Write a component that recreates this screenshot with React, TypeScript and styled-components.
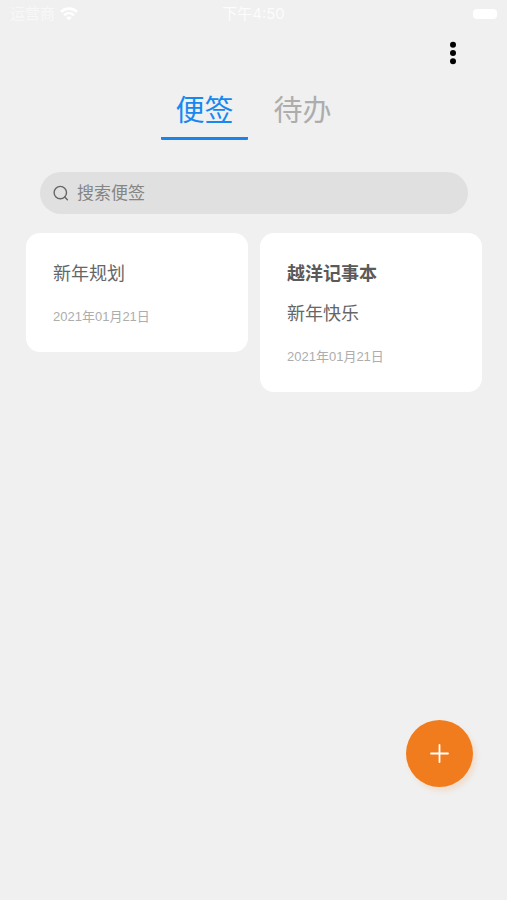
import React, { useState } from "react";
import styled, { createGlobalStyle } from "styled-components";

const GlobalStyle = createGlobalStyle`
  *, *::before, *::after { box-sizing: border-box; }
  body {
    margin: 0;
    background: #f0f0f0;
    font-family: "Liberation Sans", "Noto Sans CJK SC", sans-serif;
  }
  button, input { font-family: inherit; }
  h2, p { margin: 0; }
`;

const Screen = styled.div`
  display: flex;
  flex-direction: column;
  min-height: 100vh;
`;

const StatusBar = styled.header`
  display: grid;
  grid-template-columns: 1fr auto 1fr;
  align-items: center;
  height: 28px;
  padding: 0 10px;
  color: #fcfcfc;
  font-family: Inter, "Noto Sans CJK SC", sans-serif;
  font-size: 15px;
  line-height: 20px;
`;

const Carrier = styled.div`
  display: flex;
  align-items: center;
  gap: 5px;
  color: #f8f8f8;
`;

const Battery = styled.span`
  justify-self: end;
  width: 24px;
  height: 10px;
  border-radius: 4px;
  background: #fff;
`;

const Toolbar = styled.div`
  display: flex;
  justify-content: flex-end;
  padding: 9px 38px 0;
`;

const MenuButton = styled.button`
  display: grid;
  place-items: center;
  width: 32px;
  height: 32px;
  padding: 0;
  border: 0;
  background: none;
  cursor: pointer;
`;

const Tabs = styled.nav`
  display: flex;
  justify-content: center;
  gap: 12px;
  padding-top: 16px;
`;

const Tab = styled.button<{ $active: boolean }>`
  padding: 2px 14px;
  border: 0;
  border-bottom: 3px solid ${(p) => (p.$active ? "#1a84ea" : "transparent")};
  border-radius: 1px;
  background: none;
  color: ${(p) => (p.$active ? "#1688f0" : "#adadad")};
  font-size: 29px;
  line-height: 48px;
  cursor: pointer;
`;

const SearchBox = styled.label`
  display: flex;
  align-items: center;
  gap: 8px;
  height: 42px;
  margin: 32px 39px 0 40px;
  padding: 0 13px;
  border-radius: 21px;
  background: #e0e0e0;
`;

const SearchInput = styled.input`
  flex: 1;
  min-width: 0;
  padding: 2px 0 0;
  border: 0;
  outline: 0;
  background: none;
  color: #555;
  font-size: 17px;
  line-height: 24px;
  &::placeholder { color: #858585; opacity: 1; }
`;

const Notes = styled.main`
  display: grid;
  grid-template-columns: 1fr 1fr;
  align-items: start;
  gap: 12px;
  padding: 19px 25px 120px 26px;
`;

const Card = styled.article`
  display: flex;
  flex-direction: column;
  padding: 28px 27px 25px;
  border-radius: 14px;
  background: #fff;
  color: #666;
  font-size: 18px;
  line-height: 26px;
`;

const CardTitle = styled.h2`
  margin-bottom: 14px;
  color: #5a5a5a;
  font-size: 18px;
  font-weight: 700;
`;

const CardDate = styled.time`
  margin-top: 20px;
  color: #adadad;
  font-size: 13px;
  line-height: 20px;
`;

const AddButton = styled.button`
  position: fixed;
  right: 34px;
  bottom: 113px;
  display: grid;
  place-items: center;
  width: 67px;
  height: 67px;
  padding: 0;
  border: 0;
  border-radius: 50%;
  background: #f07c1e;
  box-shadow: 3px 4px 5px rgba(240, 124, 30, 0.16);
  cursor: pointer;
`;

const notes = [
  { id: 1, title: "", text: "新年规划", date: "2021年01月21日" },
  { id: 2, title: "越洋记事本", text: "新年快乐", date: "2021年01月21日" },
];

const tabs = ["便签", "待办"];

function WifiIcon() {
  return (
    <svg width="18" height="14" viewBox="0 0 18 14" fill="none" stroke="#fff" strokeWidth="2.6" aria-hidden="true">
      <path d="M1 4.8C5.6.6 12.4.6 17 4.8" />
      <path d="M4 8.2c2.9-2.6 7.1-2.6 10 0" />
      <path d="M6.4 10.6 9 13.4l2.6-2.8a3.8 3.8 0 0 0-5.2 0Z" fill="#fff" stroke="none" />
    </svg>
  );
}

function DotsIcon() {
  return (
    <svg width="6" height="24" viewBox="0 0 6 24" aria-hidden="true">
      <circle cx="3" cy="3.7" r="3" />
      <circle cx="3" cy="12" r="3" />
      <circle cx="3" cy="20.3" r="3" />
    </svg>
  );
}

function SearchIcon() {
  return (
    <svg width="16" height="16" viewBox="0 0 16 16" fill="none" stroke="#666" strokeWidth="1.4" strokeLinecap="round" aria-hidden="true">
      <circle cx="7.3" cy="7.6" r="6.2" />
      <path d="m11.8 12.1 2.6 2.6" />
    </svg>
  );
}

function PlusIcon() {
  return (
    <svg width="19" height="19" viewBox="0 0 19 19" stroke="#fff" strokeWidth="1.8" strokeLinecap="round" aria-hidden="true">
      <path d="M9.5 1v17M1 9.5h17" />
    </svg>
  );
}

export default function App() {
  const [active, setActive] = useState(tabs[0]);
  return (
    <Screen>
      <GlobalStyle />
      <StatusBar>
        <Carrier>
          运营商
          <WifiIcon />
        </Carrier>
        <span>下午4:50</span>
        <Battery />
      </StatusBar>
      <Toolbar>
        <MenuButton type="button" aria-label="更多">
          <DotsIcon />
        </MenuButton>
      </Toolbar>
      <Tabs>
        {tabs.map((name) => (
          <Tab key={name} type="button" $active={name === active} onClick={() => setActive(name)}>
            {name}
          </Tab>
        ))}
      </Tabs>
      <SearchBox>
        <SearchIcon />
        <SearchInput type="text" placeholder="搜索便签" aria-label="搜索便签" />
      </SearchBox>
      <Notes>
        {notes.map((note) => (
          <Card key={note.id}>
            {note.title && <CardTitle>{note.title}</CardTitle>}
            <p>{note.text}</p>
            <CardDate>{note.date}</CardDate>
          </Card>
        ))}
      </Notes>
      <AddButton type="button" aria-label="新建便签">
        <PlusIcon />
      </AddButton>
    </Screen>
  );
}
